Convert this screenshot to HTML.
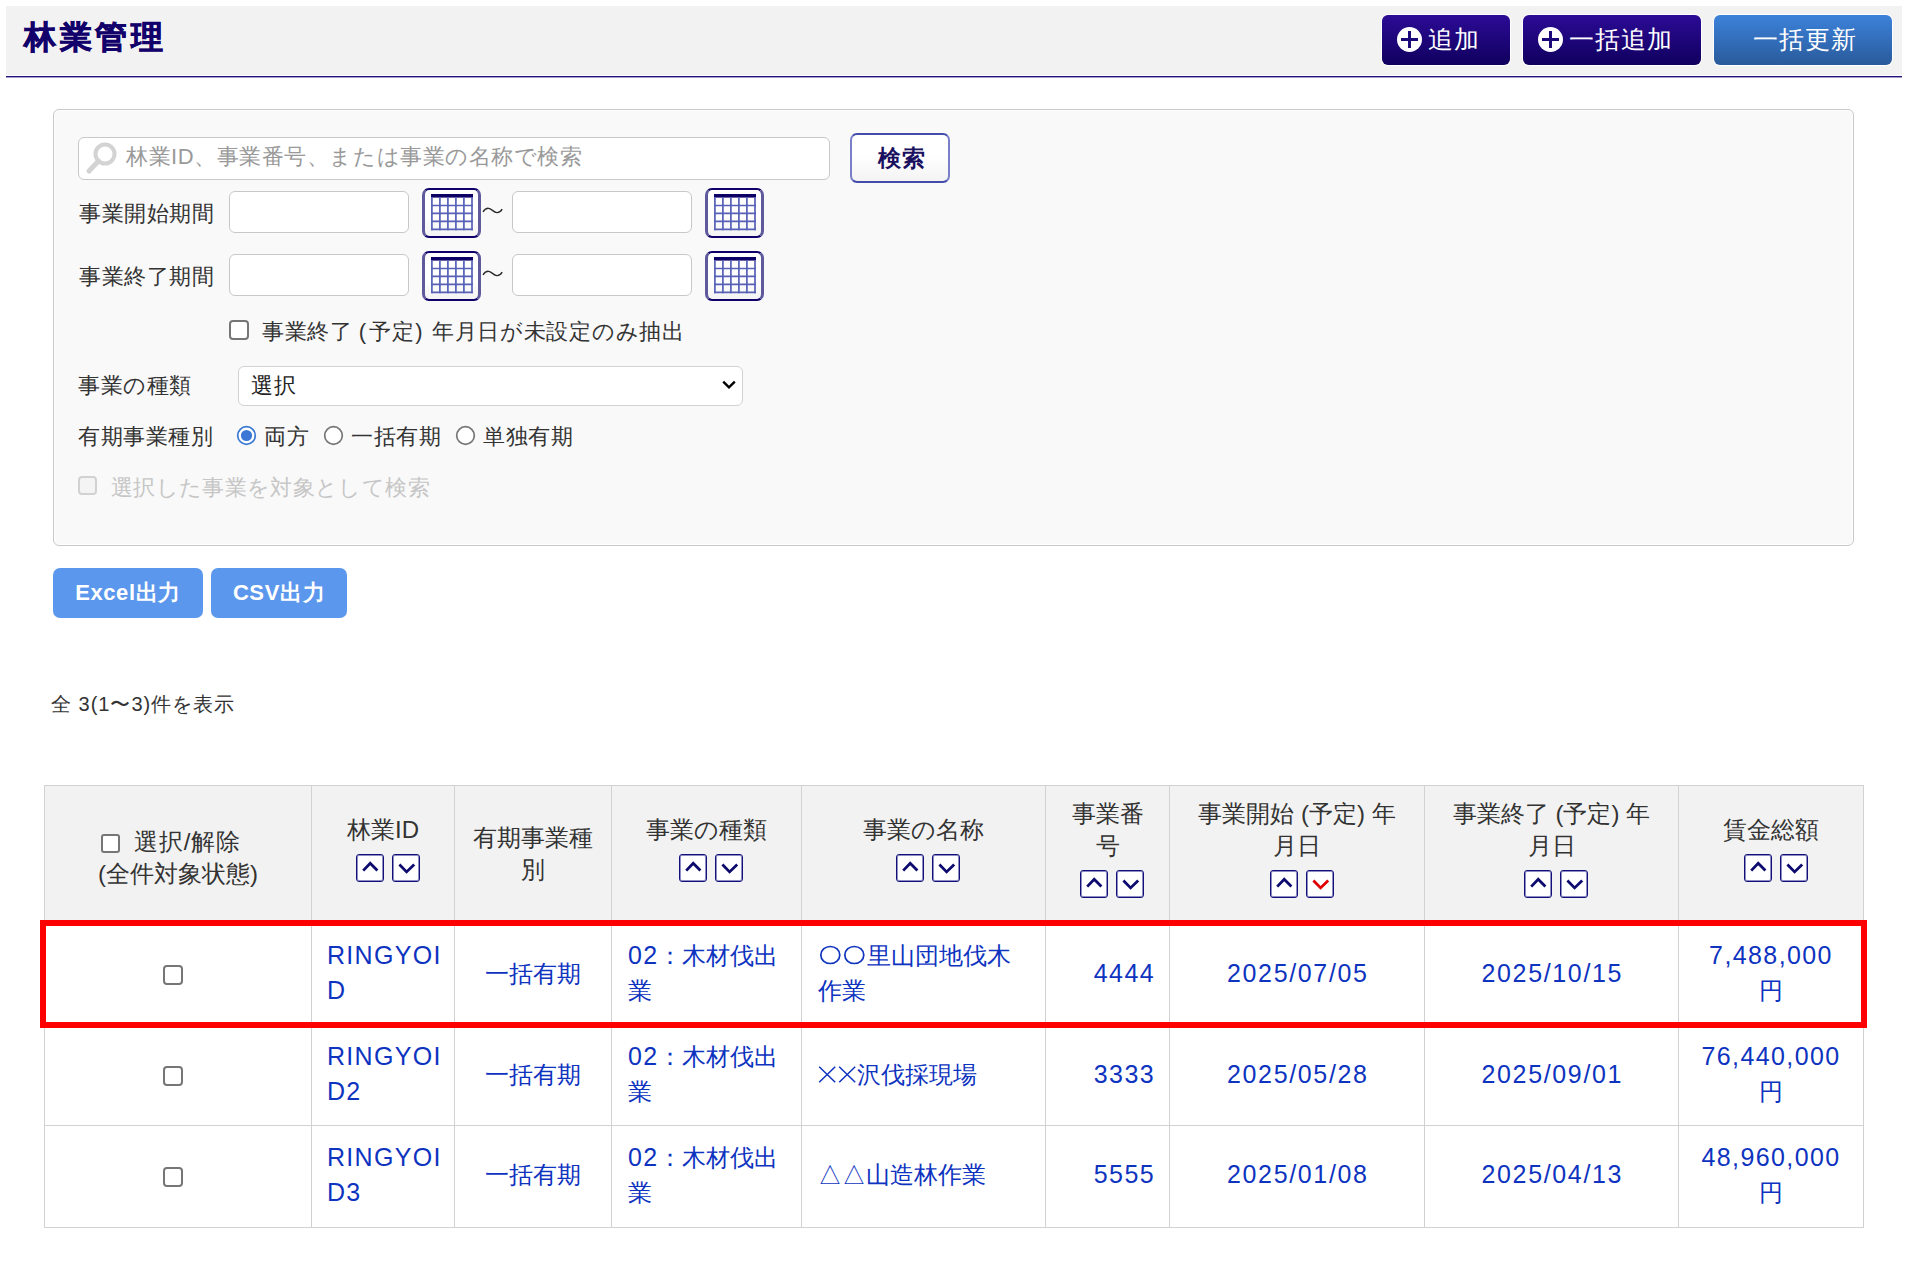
<!DOCTYPE html>
<html lang="ja">
<head>
<meta charset="utf-8">
<style>
*{box-sizing:border-box;margin:0;padding:0}
html,body{width:1908px;height:1268px;overflow:hidden;background:#fff}
body{position:relative;font-family:"Liberation Sans",sans-serif;color:#333}
.abs{position:absolute}
#hdr{left:6px;top:6px;width:1896px;height:69px;background:#f2f2f2}
#hdr1{left:6px;top:76px;width:1896px;height:1px;background:#24137c}
#hdr2{left:6px;top:77px;width:1896px;height:1px;background:#a49ccc}
#title{left:24px;top:15px;font-size:32px;letter-spacing:3.6px;font-weight:bold;color:#12006b;line-height:44px;white-space:nowrap;-webkit-text-stroke:0.7px #12006b}
.hbtn{height:50px;top:15px;border-radius:6px;color:#fff;font-size:25px;line-height:48px;letter-spacing:1px;white-space:nowrap;box-shadow:0 0 0 1px #fff}
.navy{background:linear-gradient(#2c0b96,#10005e)}
.blue{background:linear-gradient(#3c82da,#2a5a9b)}
.plus{position:absolute;width:25px;height:25px;border-radius:50%;background:#fff;top:12px}
.plus:before{content:"";position:absolute;left:4px;top:11px;width:17px;height:3px;background:#1c0878}
.plus:after{content:"";position:absolute;left:11px;top:4px;width:3px;height:17px;background:#1c0878}
#panel{left:53px;top:109px;width:1801px;height:437px;background:#f9f9f9;border:1px solid #c8c8c8;border-radius:6px;box-shadow:inset 0 0 0 1px #fff}
.inp{background:#fff;border:1px solid #c8c8c8;border-radius:6px}
.lbl{font-size:22px;line-height:30px;color:#333;white-space:nowrap;letter-spacing:0.6px}
.cal{width:59px;height:50px;border:3px solid #5f5a9c;border-top:2px solid #0e0068;border-bottom:2px solid #0e0068;border-radius:7px;background:linear-gradient(#fff 55%,#f3f3f3)}
.cal svg{position:absolute;left:6px;top:4px}
.tilde{font-size:22px;line-height:30px;color:#333}
.chk{width:20px;height:20px;border:2px solid #767676;border-radius:4px;background:#fff}
.xbtn{height:50px;top:568px;background:#5b97ec;border-radius:7px;color:#fff;font-weight:bold;font-size:22px;letter-spacing:0.6px;line-height:49px;text-align:center;white-space:nowrap}
table{position:absolute;left:44px;top:785px;width:1819px;border-collapse:collapse;table-layout:fixed}
td,th{border:1px solid #d2d2d2;text-align:center;vertical-align:middle;font-size:24px;line-height:35px;font-weight:normal}
th{line-height:32px;padding-bottom:0}
th{background:#f2f2f2;color:#333}
td{color:#0d33bf}
.n{font-size:25px;letter-spacing:1.4px}
.d{letter-spacing:1.65px;padding-left:1.6px}
.xx{display:inline-block;width:19.5px;height:17px;vertical-align:0}
.xx svg{display:block}
.oo{display:inline-block;width:24.4px;height:20px;vertical-align:-1px}
.oo svg{display:block}
.sb{display:inline-block;width:28px;height:28px;border:1px solid #14107a;border-radius:3px;background:#fff;position:relative;vertical-align:top;margin:0 4px;box-shadow:inset 0 0 0 1px rgba(50,46,150,0.55)}
.sb svg{position:absolute;left:-1px;top:-1px}
.sorts{height:48px;padding-top:8px;padding-left:9px;line-height:0}
.l{text-align:left;padding-left:16px}
.l .n{letter-spacing:1.3px}
.r{text-align:right;padding-right:14px}
.hchk{display:inline-block;width:19px;height:19px;border:2px solid #767676;border-radius:3px;background:#fff;vertical-align:-3px;margin-right:14px}
.rchk{display:inline-block;width:20px;height:20px;border:2px solid #767676;border-radius:4px;background:#fff;vertical-align:middle;margin-right:11px}
.r2 td{padding-bottom:2px}
.r3 td{padding-bottom:4px}
#red{left:40px;top:920px;width:1827px;height:108px;border:6px solid #ff0000}
</style>
</head>
<body>
<div id="hdr" class="abs"></div>
<div id="hdr1" class="abs"></div><div id="hdr2" class="abs"></div>
<div id="title" class="abs">林業管理</div>

<div class="abs hbtn navy" style="left:1382px;width:128px"><span class="plus" style="left:15px"></span><span class="abs" style="left:46px;top:0">追加</span></div>
<div class="abs hbtn navy" style="left:1523px;width:178px"><span class="plus" style="left:15px"></span><span class="abs" style="left:46px;top:0">一括追加</span></div>
<div class="abs hbtn blue" style="left:1714px;width:178px"><span class="abs" style="left:39px;top:0">一括更新</span></div>


<div id="panel" class="abs"></div>
<div class="abs inp" style="left:78px;top:137px;width:752px;height:43px"></div>
<svg class="abs" style="left:84px;top:140px" width="40" height="36" viewBox="0 0 40 36"><circle cx="21" cy="14" r="9.5" fill="none" stroke="#d3d3d3" stroke-width="4"/><line x1="14.5" y1="21" x2="5" y2="31" stroke="#d3d3d3" stroke-width="5" stroke-linecap="round"/></svg>
<div class="abs lbl" style="left:126px;top:142px;color:#999;letter-spacing:0.55px">林業ID、事業番号、または事業の名称で検索</div>
<div class="abs" style="left:850px;top:133px;width:100px;height:50px;border:2px solid #7a80c8;border-top-color:#444cab;border-bottom-color:#444cab;border-radius:7px;background:linear-gradient(#fff 45%,#f3f3f3)"></div>
<div class="abs" style="left:852px;top:133px;width:99px;height:50px;font-size:23px;line-height:50px;font-weight:bold;color:#1a1060;text-align:center;letter-spacing:1px;text-indent:1px">検索</div>

<div class="abs lbl" style="left:79px;top:199px">事業開始期間</div>
<div class="abs inp" style="left:229px;top:191px;width:180px;height:42px"></div>
<div class="abs cal" style="left:422px;top:188px"><svg width="42" height="37" viewBox="0 0 42 37"><rect x="0" y="0" width="42" height="3.6" fill="#0c0066"/><g stroke="#5560b6" stroke-width="1.7" fill="none"><line x1="0.9" y1="3" x2="0.9" y2="36.2"/><line x1="8.9" y1="3" x2="8.9" y2="36.2"/><line x1="16.9" y1="3" x2="16.9" y2="36.2"/><line x1="24.9" y1="3" x2="24.9" y2="36.2"/><line x1="32.9" y1="3" x2="32.9" y2="36.2"/><line x1="41" y1="3" x2="41" y2="36.2"/><line x1="0" y1="11.5" x2="42" y2="11.5"/><line x1="0" y1="19.4" x2="42" y2="19.4"/><line x1="0" y1="27.3" x2="42" y2="27.3"/><line x1="0" y1="35.4" x2="42" y2="35.4"/></g></svg></div>
<svg class="abs" style="left:480px;top:204px" width="26" height="12" viewBox="0 0 26 12"><path d="M3,7.8 C4.8,5 6.5,4.2 8.5,4.3 C11.5,4.5 13.5,8.4 16.8,8.6 C18.8,8.7 20.8,7.6 22.2,5.2" stroke="#2a2a2a" stroke-width="1.35" fill="none"/></svg>
<div class="abs inp" style="left:512px;top:191px;width:180px;height:42px"></div>
<div class="abs cal" style="left:705px;top:188px"><svg width="42" height="37" viewBox="0 0 42 37"><rect x="0" y="0" width="42" height="3.6" fill="#0c0066"/><g stroke="#5560b6" stroke-width="1.7" fill="none"><line x1="0.9" y1="3" x2="0.9" y2="36.2"/><line x1="8.9" y1="3" x2="8.9" y2="36.2"/><line x1="16.9" y1="3" x2="16.9" y2="36.2"/><line x1="24.9" y1="3" x2="24.9" y2="36.2"/><line x1="32.9" y1="3" x2="32.9" y2="36.2"/><line x1="41" y1="3" x2="41" y2="36.2"/><line x1="0" y1="11.5" x2="42" y2="11.5"/><line x1="0" y1="19.4" x2="42" y2="19.4"/><line x1="0" y1="27.3" x2="42" y2="27.3"/><line x1="0" y1="35.4" x2="42" y2="35.4"/></g></svg></div>

<div class="abs lbl" style="left:79px;top:262px">事業終了期間</div>
<div class="abs inp" style="left:229px;top:254px;width:180px;height:42px"></div>
<div class="abs cal" style="left:422px;top:251px"><svg width="42" height="37" viewBox="0 0 42 37"><rect x="0" y="0" width="42" height="3.6" fill="#0c0066"/><g stroke="#5560b6" stroke-width="1.7" fill="none"><line x1="0.9" y1="3" x2="0.9" y2="36.2"/><line x1="8.9" y1="3" x2="8.9" y2="36.2"/><line x1="16.9" y1="3" x2="16.9" y2="36.2"/><line x1="24.9" y1="3" x2="24.9" y2="36.2"/><line x1="32.9" y1="3" x2="32.9" y2="36.2"/><line x1="41" y1="3" x2="41" y2="36.2"/><line x1="0" y1="11.5" x2="42" y2="11.5"/><line x1="0" y1="19.4" x2="42" y2="19.4"/><line x1="0" y1="27.3" x2="42" y2="27.3"/><line x1="0" y1="35.4" x2="42" y2="35.4"/></g></svg></div>
<svg class="abs" style="left:480px;top:267px" width="26" height="12" viewBox="0 0 26 12"><path d="M3,7.8 C4.8,5 6.5,4.2 8.5,4.3 C11.5,4.5 13.5,8.4 16.8,8.6 C18.8,8.7 20.8,7.6 22.2,5.2" stroke="#2a2a2a" stroke-width="1.35" fill="none"/></svg>
<div class="abs inp" style="left:512px;top:254px;width:180px;height:42px"></div>
<div class="abs cal" style="left:705px;top:251px"><svg width="42" height="37" viewBox="0 0 42 37"><rect x="0" y="0" width="42" height="3.6" fill="#0c0066"/><g stroke="#5560b6" stroke-width="1.7" fill="none"><line x1="0.9" y1="3" x2="0.9" y2="36.2"/><line x1="8.9" y1="3" x2="8.9" y2="36.2"/><line x1="16.9" y1="3" x2="16.9" y2="36.2"/><line x1="24.9" y1="3" x2="24.9" y2="36.2"/><line x1="32.9" y1="3" x2="32.9" y2="36.2"/><line x1="41" y1="3" x2="41" y2="36.2"/><line x1="0" y1="11.5" x2="42" y2="11.5"/><line x1="0" y1="19.4" x2="42" y2="19.4"/><line x1="0" y1="27.3" x2="42" y2="27.3"/><line x1="0" y1="35.4" x2="42" y2="35.4"/></g></svg></div>

<div class="abs chk" style="left:229px;top:320px"></div>
<div class="abs lbl" style="left:262px;top:317px;word-spacing:-0.5px;letter-spacing:0.6px">事業終了 <span style="margin-right:2.5px">(</span>予定<span style="margin-left:1px">)</span> <span style="margin-left:2.5px;letter-spacing:0.7px">年月日が未設定のみ抽出</span></div>

<div class="abs lbl" style="left:78px;top:371px">事業の種類</div>
<div class="abs inp" style="left:238px;top:366px;width:505px;height:40px;border-radius:6px;border-color:#d2d2d2"></div>
<div class="abs lbl" style="left:251px;top:371px;color:#222">選択</div>
<svg class="abs" style="left:720px;top:378px" width="18" height="14" viewBox="0 0 18 14"><polyline points="3.2,3.6 9,9.4 14.8,3.6" fill="none" stroke="#000" stroke-width="2.4"/></svg>

<div class="abs lbl" style="left:78px;top:422px">有期事業種別</div>
<svg class="abs" style="left:236px;top:425px" width="21" height="21" viewBox="0 0 21 21"><circle cx="10.5" cy="10.5" r="8.8" fill="#fff" stroke="#3b78d6" stroke-width="1.7"/><circle cx="10.5" cy="10.5" r="5.6" fill="#3b78d6"/></svg>
<div class="abs lbl" style="left:264px;top:422px">両方</div>
<svg class="abs" style="left:323px;top:425px" width="21" height="21" viewBox="0 0 21 21"><circle cx="10.5" cy="10.5" r="8.8" fill="#fff" stroke="#767676" stroke-width="1.7"/></svg>
<div class="abs lbl" style="left:351px;top:422px">一括有期</div>
<svg class="abs" style="left:455px;top:425px" width="21" height="21" viewBox="0 0 21 21"><circle cx="10.5" cy="10.5" r="8.8" fill="#fff" stroke="#767676" stroke-width="1.7"/></svg>
<div class="abs lbl" style="left:483px;top:422px">単独有期</div>

<div class="abs chk" style="left:78px;top:476px;width:19px;height:19px;border-color:#d2d2d2;background:#f4f4f4"></div>
<div class="abs lbl" style="left:111px;top:473px;color:#c6c6c6;letter-spacing:0.35px">選択した事業を対象として検索</div>

<div class="abs xbtn" style="left:53px;width:150px">Excel出力</div>
<div class="abs xbtn" style="left:211px;width:136px">CSV出力</div>

<div class="abs" style="left:51px;top:690px;font-size:20px;line-height:28px;color:#333;white-space:nowrap;letter-spacing:1px">全 3(1〜3)件を表示</div>


<table>
<colgroup><col style="width:267px"><col style="width:143px"><col style="width:157px"><col style="width:190px"><col style="width:244px"><col style="width:124px"><col style="width:255px"><col style="width:254px"><col style="width:185px"></colgroup>
<tr style="height:136px">
<th style="padding-top:9px"><span style="position:relative;left:-7px"><span class="hchk"></span><span style="letter-spacing:0.8px">選択/解除</span></span><br>(全件対象状態)</th>
<th>林業ID<div class="sorts"><span class="sb"><svg width="28" height="28" viewBox="0 0 28 28"><polyline points="7.2,16.6 14.2,9.3 21.4,16.6" fill="none" stroke="#0c0a6e" stroke-width="2.8"/></svg></span><span class="sb"><svg width="28" height="28" viewBox="0 0 28 28"><polyline points="7.4,10.6 14.6,17.9 22.2,10.6" fill="none" stroke="#0c0a6e" stroke-width="2.8"/></svg></span></div></th>
<th>有期事業種<br>別</th>
<th>事業の種類<div class="sorts"><span class="sb"><svg width="28" height="28" viewBox="0 0 28 28"><polyline points="7.2,16.6 14.2,9.3 21.4,16.6" fill="none" stroke="#0c0a6e" stroke-width="2.8"/></svg></span><span class="sb"><svg width="28" height="28" viewBox="0 0 28 28"><polyline points="7.4,10.6 14.6,17.9 22.2,10.6" fill="none" stroke="#0c0a6e" stroke-width="2.8"/></svg></span></div></th>
<th>事業の名称<div class="sorts"><span class="sb"><svg width="28" height="28" viewBox="0 0 28 28"><polyline points="7.2,16.6 14.2,9.3 21.4,16.6" fill="none" stroke="#0c0a6e" stroke-width="2.8"/></svg></span><span class="sb"><svg width="28" height="28" viewBox="0 0 28 28"><polyline points="7.4,10.6 14.6,17.9 22.2,10.6" fill="none" stroke="#0c0a6e" stroke-width="2.8"/></svg></span></div></th>
<th>事業番<br>号<div class="sorts"><span class="sb"><svg width="28" height="28" viewBox="0 0 28 28"><polyline points="7.2,16.6 14.2,9.3 21.4,16.6" fill="none" stroke="#0c0a6e" stroke-width="2.8"/></svg></span><span class="sb"><svg width="28" height="28" viewBox="0 0 28 28"><polyline points="7.4,10.6 14.6,17.9 22.2,10.6" fill="none" stroke="#0c0a6e" stroke-width="2.8"/></svg></span></div></th>
<th>事業開始 (予定) 年<br>月日<div class="sorts"><span class="sb"><svg width="28" height="28" viewBox="0 0 28 28"><polyline points="7.2,16.6 14.2,9.3 21.4,16.6" fill="none" stroke="#0c0a6e" stroke-width="2.8"/></svg></span><span class="sb"><svg width="28" height="28" viewBox="0 0 28 28"><polyline points="7.4,10.6 14.6,17.9 22.2,10.6" fill="none" stroke="#e00000" stroke-width="2.8"/></svg></span></div></th>
<th>事業終了 (予定) 年<br>月日<div class="sorts"><span class="sb"><svg width="28" height="28" viewBox="0 0 28 28"><polyline points="7.2,16.6 14.2,9.3 21.4,16.6" fill="none" stroke="#0c0a6e" stroke-width="2.8"/></svg></span><span class="sb"><svg width="28" height="28" viewBox="0 0 28 28"><polyline points="7.4,10.6 14.6,17.9 22.2,10.6" fill="none" stroke="#0c0a6e" stroke-width="2.8"/></svg></span></div></th>
<th>賃金総額<div class="sorts"><span class="sb"><svg width="28" height="28" viewBox="0 0 28 28"><polyline points="7.2,16.6 14.2,9.3 21.4,16.6" fill="none" stroke="#0c0a6e" stroke-width="2.8"/></svg></span><span class="sb"><svg width="28" height="28" viewBox="0 0 28 28"><polyline points="7.4,10.6 14.6,17.9 22.2,10.6" fill="none" stroke="#0c0a6e" stroke-width="2.8"/></svg></span></div></th>
</tr>
<tr style="height:103px">
<td><span class="rchk"></span></td>
<td class="l" style="padding-left:15px"><span class="n">RINGYOI<br>D</span></td>
<td>一括有期</td>
<td class="l"><span class="n">02</span>：木材伐出<br>業</td>
<td class="l"><span class="oo"><svg width="24" height="20" viewBox="0 0 24 20"><ellipse cx="12.3" cy="10" rx="9.5" ry="8.5" stroke="#0d33bf" stroke-width="1.7" fill="none"/></svg></span><span class="oo"><svg width="24" height="20" viewBox="0 0 24 20"><ellipse cx="12.3" cy="10" rx="9.5" ry="8.5" stroke="#0d33bf" stroke-width="1.7" fill="none"/></svg></span>里山団地伐木<br>作業</td>
<td class="r"><span class="n">4444</span></td>
<td><span class="n d">2025/07/05</span></td>
<td><span class="n d">2025/10/15</span></td>
<td><span class="n">7,488,000</span><br>円</td>
</tr>
<tr style="height:101px" class="r2">
<td><span class="rchk"></span></td>
<td class="l" style="padding-left:15px"><span class="n">RINGYOI<br>D2</span></td>
<td>一括有期</td>
<td class="l"><span class="n">02</span>：木材伐出<br>業</td>
<td class="l"><span class="xx"><svg width="19" height="17" viewBox="0 0 19 17"><path d="M1.2,0.8 L17.2,16.2 M17.2,0.8 L1.2,16.2" stroke="#0d33bf" stroke-width="1.5" fill="none"/></svg></span><span class="xx"><svg width="19" height="17" viewBox="0 0 19 17"><path d="M1.2,0.8 L17.2,16.2 M17.2,0.8 L1.2,16.2" stroke="#0d33bf" stroke-width="1.5" fill="none"/></svg></span>沢伐採現場</td>
<td class="r"><span class="n">3333</span></td>
<td><span class="n d">2025/05/28</span></td>
<td><span class="n d">2025/09/01</span></td>
<td><span class="n">76,440,000</span><br>円</td>
</tr>
<tr style="height:102px" class="r3">
<td><span class="rchk"></span></td>
<td class="l" style="padding-left:15px"><span class="n">RINGYOI<br>D3</span></td>
<td>一括有期</td>
<td class="l"><span class="n">02</span>：木材伐出<br>業</td>
<td class="l">△△山造林作業</td>
<td class="r"><span class="n">5555</span></td>
<td><span class="n d">2025/01/08</span></td>
<td><span class="n d">2025/04/13</span></td>
<td><span class="n">48,960,000</span><br>円</td>
</tr>
</table>
<div id="red" class="abs"></div>
</body>
</html>
